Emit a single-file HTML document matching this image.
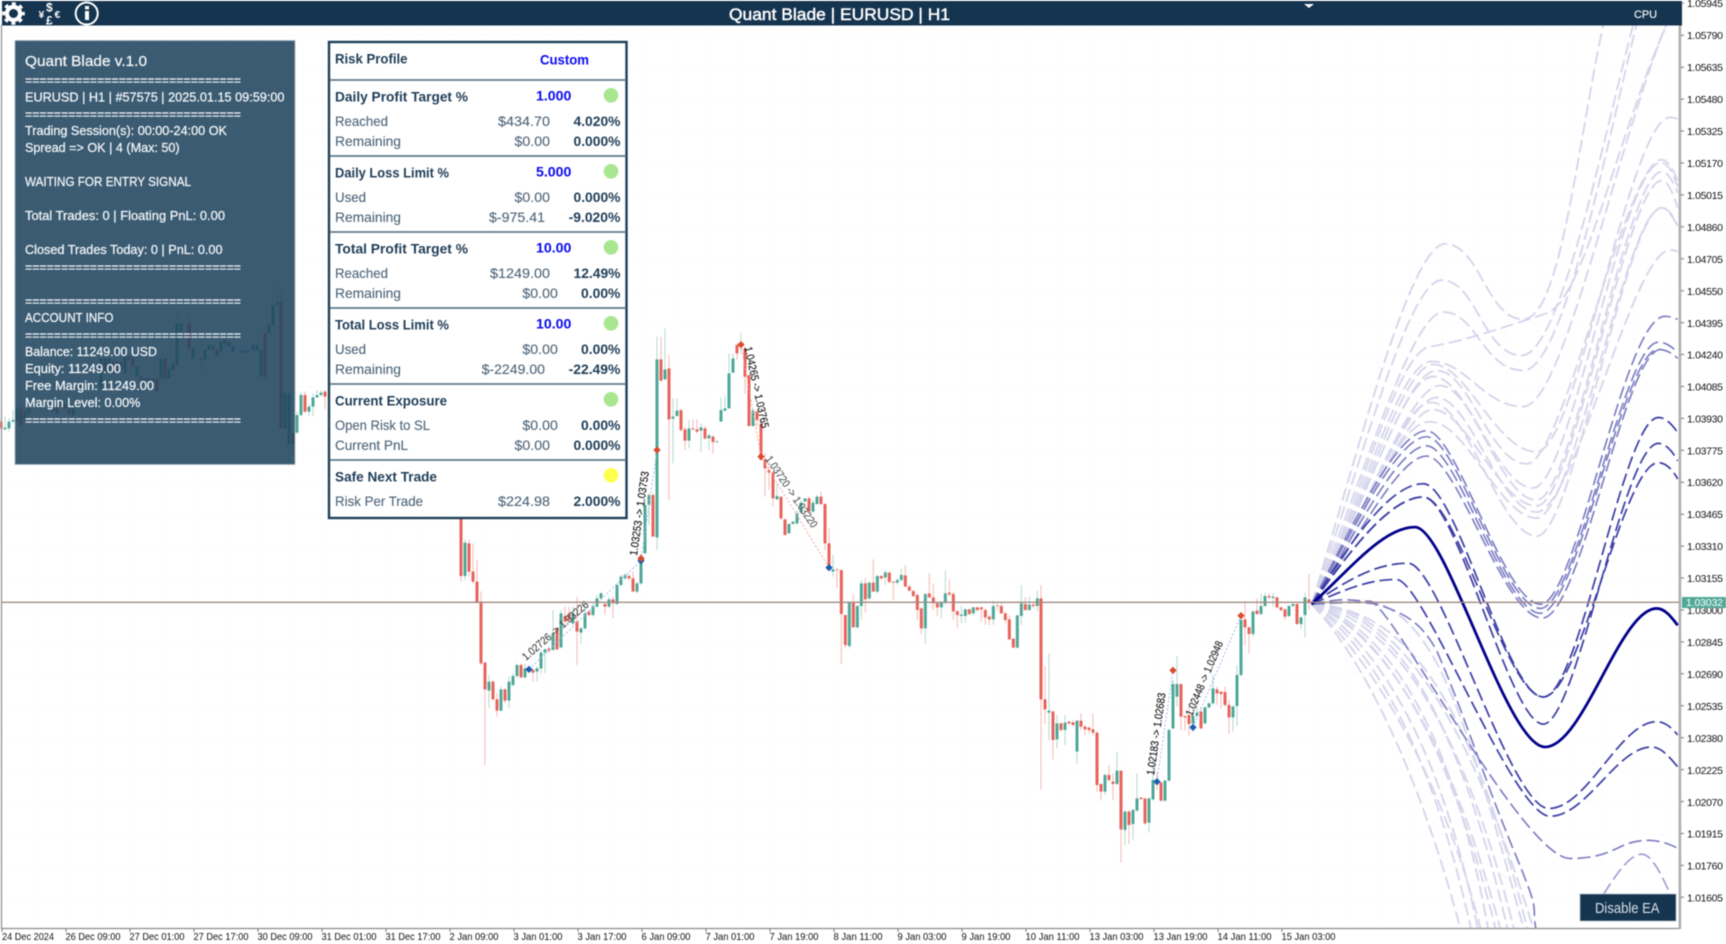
<!DOCTYPE html>
<html><head><meta charset="utf-8"><title>Quant Blade</title>
<style>
html,body{margin:0;padding:0;background:#fff;width:1726px;height:944px;overflow:hidden}
svg{display:block;position:absolute;left:0;top:0;filter:blur(.4px)}
text{font-family:"Liberation Sans",sans-serif}
.rb{fill:none;stroke:#e8635a;stroke-width:9}
.gb{fill:none;stroke:#4fa898;stroke-width:9}
.rw{fill:none;stroke:#f5b9b4;stroke-width:3}
.gw{fill:none;stroke:#b3dad2;stroke-width:3}
.mk-b{fill:#1c5db0}.mk-r{fill:#d94c2c}
.dl-b{fill:none;stroke:#9dbbe8;stroke-width:3;stroke-dasharray:6 6}
.dl-r{fill:none;stroke:#f0a898;stroke-width:3;stroke-dasharray:6 6}
.f path{fill:none;vector-effect:non-scaling-stroke;stroke-dasharray:13 5}
.fl path{stroke:#d6d6ec;stroke-width:1.9}
.fm path{stroke:#7a7ac2;stroke-width:1.6}
.fd path{stroke:#3c3ca6;stroke-width:1.7}
.p text{fill:#f4f7f9;font-size:13px;stroke:#f4f7f9;stroke-width:.25}
.t{fill:#1f3d57;font-size:14px;font-weight:bold}
.l{fill:#4c6377;font-size:14px;stroke:#4c6377;stroke-width:.1}
.a{fill:#4c6377;font-size:14px;stroke:#4c6377;stroke-width:.1}
.c{fill:#1f3d57;font-size:14px;font-weight:bold}
.v{fill:#0a0aee;font-size:14px;font-weight:bold}
.ax text{fill:#111;font-size:10.5px}
.rt{font-size:11px;stroke-width:.15}
</style></head>
<body>
<svg width="1726" height="944" viewBox="0 0 1726 944" xmlns="http://www.w3.org/2000/svg">
<defs>
<pattern id="gr" x="2" y="3.3" width="32" height="31.93" patternUnits="userSpaceOnUse">
<path d="M0 0V31.93M0 0H32" fill="none" stroke="#e9e9e9" stroke-width="1" stroke-dasharray="1 3"/>
</pattern>
<clipPath id="cc"><rect x="2" y="25" width="1678" height="903"/></clipPath>
</defs>
<rect width="1726" height="944" fill="#fff"/>
<rect x="2" y="25" width="1678" height="903" fill="url(#gr)"/>

<!-- left candles -->
<g transform="translate(0,280) scale(.33333)">
<path class="rw" d="M915 335V400M975 330V388M3 415V450M843 30V445M879 455V525M795 150V295M567 100V210M495 230V300M471 290V340M63 375V440M171 365V405"/>
<path class="gw" d="M891 395V462M903 335V410M927 370V408M939 340V408M951 330V355M963 330V350M27 415V455M39 390V430M51 375V430M75 385V425M15 410V450M819 35V140M831 10V80M867 335V550M855 315V450M783 205V295M531 95V260M303 225V335M603 230V280M579 200V240"/>
<path class="gb" d="M891 405V458M903 345V405M927 380V395M939 352V380M951 345V352M963 338V345M27 425V445M39 420V425M51 385V425M15 443V448M75 395V415M87 385V400M819 75V135M807 135V160M831 68V75M855 340V445M867 340V495M783 210V290M771 195V212M759 195V210M735 212V218M723 212V218M699 200V215M687 185V200M663 185V215M639 195V210M627 195V210M615 210V240M579 205V235M543 130V155M531 130V255M519 250V270M507 265V295M483 235V295M459 295V310M435 295V305M411 260V290M375 230V280M351 245V255M327 235V275M303 235V330M219 385V405M183 370V375M159 380V395"/>
<path class="rb" d="M915 345V395M975 335V350M3 425V445M843 65V445M879 460V492M795 160V290M567 130V205M495 235V295M471 295V335M447 295V305M423 290V300M399 235V260M387 230V240M363 245V270M339 245V280M315 235V280M651 210V228M675 180V190M207 385V402M195 372V385M171 370V400M63 385V435M603 235V240M747 212V215"/>
</g>

<!-- candles group A -->
<g transform="translate(440,320) scale(.33333)">
<path class="rw" d="M63 594V785M87 658V770M99 670V790M111 720V850M123 815V1035M135 1025V1335M159 1080V1140M171 1120V1190M195 1105V1150M243 1030V1075M279 1045V1085M327 980V1000M351 920V990M375 860V910M387 860V905M411 830V1035M447 870V890M495 850V885M519 830V895M567 762V780M579 755V815M639 520V650M663 50V185M687 105V540M723 270V335M735 320V390M759 298V330M771 298V340M795 318V360M819 345V400M891 70V120M915 80V220M927 165V320M951 270V320M963 300V420M975 400V530M987 440V510M999 455V560M1023 530V600M1035 595V645M1107 530V580M1143 515V555M1155 550V690M1167 625V750M1191 745V805"/>
<path class="gw" d="M75 658V780M147 1065V1165M183 1100V1175M207 1070V1165M219 1060V1100M231 1030V1075M255 1030V1075M291 1040V1085M303 990V1060M315 985V1060M339 870V990M363 870V985M399 860V915M423 920V970M435 860V930M459 850V890M471 825V865M483 815V840M507 830V865M531 790V855M543 765V800M555 760V780M591 785V820M603 700V795M615 540V700M627 520V615M651 50V690M675 25V180M699 235V430M711 235V290M747 300V385M783 310V395M807 340V390M831 360V370M843 232V305M855 230V275M867 100V265M879 100V160M903 38V100M939 265V320M1011 490V540M1047 610V640M1071 570V615M1083 540V580M1119 540V580M1131 525V555M1179 705V770"/>
<path class="rb" d="M63 594V768M87 670V755M99 755V785M111 785V848M123 845V1030M135 1028V1108M159 1085V1138M171 1138V1172M195 1108V1142M243 1035V1072M267 1048V1055M279 1050V1058M327 985V992M351 925V988M375 888V905M387 880V900M411 905V935M447 875V885M495 852V860M519 838V850M567 768V775M579 775V815M639 525V650M663 118V182M687 145V298M723 270V330M735 328V362M759 325V328M771 328V335M795 325V355M819 350V366M891 75V100M915 85V170M927 165V318M951 275V300M963 310V420M975 418V445M987 450V458M999 458V535M1023 530V595M1035 598V645M1107 535V575M1143 530V552M1155 552V670M1167 670V745M1191 748V750"/>
<path class="gb" d="M75 668V768M147 1085V1112M183 1108V1172M207 1085V1142M219 1068V1095M231 1035V1068M255 1045V1072M291 1045V1055M303 998V1045M315 988V998M339 940V990M363 880V982M399 880V910M423 925V938M435 880V925M459 858V885M471 835V860M483 820V835M507 838V860M531 795V852M543 770V795M555 765V775M591 790V815M603 725V790M615 555V700M627 525V555M651 118V652M675 148V178M699 290V296M711 272V288M747 325V362M783 322V332M807 346V355M831 364V366M843 270V305M855 265V272M867 160V265M879 115V158M939 272V318M1011 528V538M1047 612V640M1059 605V612M1071 580V610M1083 548V578M1095 535V545M1119 548V575M1131 530V552M1179 748V755"/>
<path class="dl-b" d="M267 1048L603 722M603 722L651 390"/>
<path class="dl-r" d="M903 74L963 410M963 410L1167 743"/>
<path class="mk-b" d="M267 1037l11 11-11 11-11-11zM603 711l11 11-11 11-11-11zM1167 732l11 11-11 11-11-11z"/>
<path class="mk-r" d="M603 704l11 11-11 11-11-11zM651 379l11 11-11 11-11-11zM903 63l11 11-11 11-11-11zM963 399l11 11-11 11-11-11z"/>
</g>

<!-- candles group B -->
<g transform="translate(820,540) scale(.33333)">
<path class="rw" d="M64 90V372M76 225V325M100 165V262M136 115V218M160 58V155M184 105V120M208 95V130M220 125V180M256 75V140M268 135V155M280 150V172M292 160V240M304 200V282M328 100V175M340 130V210M352 185V228M388 118V170M400 155V240M412 210V265M448 205V225M472 200V215M484 200V245M496 205V255M508 225V255M532 190V210M544 188V222M556 215V250M568 225V300M580 295V325M616 172V212M640 190V205"/>
<path class="gw" d="M88 185V325M112 195V265M124 120V240M148 125V180M172 105V160M196 90V135M232 115V135M244 85V125M316 160V310M364 185V235M376 92V195M424 198V250M436 205V248M460 200V225M520 182V255M592 225V325M604 135V255M628 170V212M652 152V215"/>
<path class="rb" d="M64 90V222M76 225V315M100 188V262M136 130V178M160 128V155M184 108V115M208 98V126M220 125V128M256 106V140M268 140V152M280 153V168M292 165V210M304 205V265M328 160V172M340 172V190M352 190V202M388 158V163M400 162V214M412 214V225M448 208V222M472 202V210M484 202V208M496 210V232M508 230V238M532 196V198M544 198V220M556 220V240M568 238V298M580 296V323M616 192V210M640 194V198"/>
<path class="gb" d="M88 188V318M112 198V262M124 130V198M148 128V175M172 108V155M196 97V112M232 120V128M244 105V120M316 162V265M364 188V202M376 160V188M424 224V228M436 208V228M460 202V220M520 198V238M592 226V323M604 190V228M628 194V210M652 175V198"/>
</g>

<!-- candles group C -->
<g transform="translate(1000,560) scale(.33333)">
<path class="rw" d="M123 75V688M135 318V492M159 450V598M183 488V515M207 483V495M219 480V500M243 460V510M255 495V525M267 500V520M279 460V525M291 515V695M303 670V720M327 615V665M339 640V720M363 632V908M387 750V852M423 715V720M435 715V795M471 635V690M483 665V725M543 372V510M555 468V512M567 440V528M603 440V508M651 380V435M663 395V445M675 380V440M687 420V522M735 125V255M747 200V280M771 115V165M807 100V118M831 110V145M843 140V155M855 145V180M891 130V195M927 42V150"/>
<path class="gw" d="M147 280V542M171 465V565M195 465V555M231 480V612M315 640V705M351 575V675M375 750V855M399 745V840M411 640V755M447 712V818M459 600V722M495 660V725M507 505V665M519 360V508M531 288V440M579 440V515M591 440V472M615 440V492M627 425V445M639 345V435M699 435V515M711 315V498M723 165V350M759 150V230M783 100V165M795 98V140M819 100V140M867 135V172M879 130V142M903 170V205M915 98V232"/>
<path class="rb" d="M123 115V418M135 418V448M159 455V540M183 490V510M207 485V490M219 487V495M243 482V500M255 500V508M267 503V510M279 508V518M291 518V675M303 672V695M327 645V660M339 665V672M363 632V808M387 755V795M423 713V717M435 715V790M471 658V668M483 668V722M543 372V470M555 468V472M567 465V492M603 455V505M651 388V400M663 395V402M675 396V435M687 435V472M735 178V202M747 202V222M771 152V162M807 108V112M831 112V142M843 142V150M855 148V170M891 132V192M927 118V128"/>
<path class="gb" d="M147 452V458M171 490V538M195 488V510M231 482V575M315 645V695M351 632V672M375 755V810M399 750V792M411 715V752M447 715V788M459 660V718M495 662V722M507 510V662M519 372V505M531 372V410M579 468V490M591 458V468M615 442V490M627 430V442M639 385V430M699 440V472M711 345V438M723 180V345M759 155V222M783 138V162M795 108V138M819 110V114M867 138V168M879 132V138M903 172V192M915 112V165"/>
<path class="dl-b" d="M471 665L519 331M579 502L723 167"/>
<path class="mk-b" d="M471 654l11 11-11 11-11-11zM579 491l11 11-11 11-11-11z"/>
<path class="mk-r" d="M519 320l11 11-11 11-11-11zM723 156l11 11-11 11-11-11z"/>
</g>

<!-- rotated labels -->
<text class="rt" transform="translate(526,661) rotate(-41)" fill="#444" stroke="#444" textLength="84" lengthAdjust="spacingAndGlyphs">1.02726 -&gt; 1.03226</text>
<text class="rt" transform="translate(637,556) rotate(-82)" fill="#111" stroke="#111" textLength="85" lengthAdjust="spacingAndGlyphs">1.03253 -&gt; 1.03753</text>
<text class="rt" transform="translate(744.5,347.5) rotate(78)" fill="#111" stroke="#111" textLength="83" lengthAdjust="spacingAndGlyphs">1.04265 -&gt; 1.03765</text>
<text class="rt" transform="translate(765,459) rotate(56)" fill="#555" stroke="#555" textLength="84" lengthAdjust="spacingAndGlyphs">1.03720 -&gt; 1.03220</text>
<text class="rt" transform="translate(1154,775.5) rotate(-82)" fill="#111" stroke="#111" textLength="83" lengthAdjust="spacingAndGlyphs">1.02183 -&gt; 1.02683</text>
<text class="rt" transform="translate(1192,716.6) rotate(-67)" fill="#222" stroke="#222" textLength="80" lengthAdjust="spacingAndGlyphs">1.02448 -&gt; 1.02948</text>

<!-- forecast fan -->
<g clip-path="url(#cc)">
<g transform="translate(1250,0) scale(.33333,.60241)">
<g class="f fl">
<path d="M185 1003C320 760 480 405 585 405S710 530 820 530S980 250 1060 40"/>
<path d="M185 1003C320 800 470 465 575 465S700 590 815 590S1060 230 1150 40"/>
<path d="M185 1003C320 830 480 518 580 518S700 615 820 615S1070 240 1160 40"/>
<path d="M185 1003C320 860 440 575 545 575C650 565 780 540 890 520S1100 230 1250 40"/>
<path d="M185 1003C320 870 440 600 545 600S700 675 820 675S1100 240 1250 40"/>
<path d="M185 1003C320 880 450 605 550 605S740 750 860 750S1140 195 1260 195C1270 195 1278 196 1283 198"/>
<path d="M185 1003C320 880 460 615 560 615S720 770 830 770S1130 265 1235 265C1255 265 1272 285 1283 300"/>
<path d="M185 1003C320 895 470 640 570 640S750 830 860 830S1130 285 1235 285C1255 285 1272 305 1283 320"/>
<path d="M185 1003C320 900 440 668 545 668S750 890 860 890S1130 345 1235 345C1255 345 1272 360 1283 375"/>
<path d="M185 1003C320 895 460 660 560 660S750 850 860 850S1150 415 1260 415C1268 415 1276 416 1283 418"/>
<path d="M185 1003C320 900 430 700 540 700S750 860 860 860S1130 345 1235 345C1255 345 1272 365 1283 375"/>
<path d="M185 1003C320 885 450 625 550 625S740 810 850 810S1120 270 1232 270C1255 270 1272 290 1283 310"/>
<path d="M185 1003C320 905 450 680 550 680S750 840 860 840S1130 300 1235 300C1255 300 1272 325 1283 345"/>
<path d="M185 1003C280 1000 330 998 380 1000C560 1040 640 1170 830 1560"/>
<path d="M185 1003C400 1000 640 1150 860 1560"/>
<path d="M185 1003C380 1020 620 1150 800 1560"/>
<path d="M185 1003C360 1040 580 1180 760 1560"/>
<path d="M185 1003C340 1060 540 1220 670 1560"/>
<path d="M185 1003C320 1080 500 1260 640 1560"/>
<path d="M185 1003C380 1010 600 1120 780 1560"/>
<path d="M185 1003C370 1030 600 1170 720 1560"/>
<path d="M185 1003C300 1060 560 1240 700 1560"/>
<path d="M185 1003C420 1010 640 1100 840 1560"/>
<path d="M185 1003C340 1030 570 1160 745 1560"/>
<path d="M185 1003C330 1045 560 1190 690 1560"/>
</g>
<g class="f fm">
<path d="M185 1003C300 880 440 715 530 715S760 1000 870 1003S1120 525 1245 525C1260 525 1272 528 1283 530"/>
<path d="M185 1003C300 890 440 725 530 725S760 1008 870 1010S1120 568 1225 568C1250 568 1270 578 1283 585"/>
<path d="M185 1003C300 905 440 740 530 740S760 1015 870 1018S1120 580 1225 580C1250 580 1270 588 1283 595"/>
<path d="M185 1003C300 920 440 757 530 757S760 1022 875 1026S1120 590 1230 580"/>
<path d="M185 1003C280 1000 330 998 380 1003C480 1020 520 1040 560 1080C640 1180 700 1290 790 1410S840 1490 860 1550"/>
<path d="M185 1003C300 990 300 998 360 998S820 1425 960 1425S1100 1395 1195 1395C1225 1395 1255 1400 1283 1408"/>
<path style="stroke:#9a9ad0" d="M1060 1485C1100 1450 1140 1418 1175 1418S1240 1460 1283 1510"/>
</g>
<g class="f fd">
<path d="M185 1003C300 900 420 803 520 803S770 1157 880 1157S1120 693 1225 693C1250 693 1270 708 1283 718"/>
<path d="M185 1003C300 915 420 825 520 825S780 1202 880 1202S1120 736 1225 736C1250 736 1270 752 1283 765"/>
<path d="M185 1003C300 915 420 825 520 825S770 1157 880 1157S1120 768 1225 768C1250 768 1270 782 1283 795"/>
<path d="M185 1003C300 960 380 935 475 935S780 1340 895 1342S1110 1198 1220 1198C1245 1198 1265 1208 1283 1220"/>
<path d="M185 1003C300 975 360 962 440 962S790 1355 900 1355S1100 1240 1205 1240C1235 1240 1260 1258 1283 1273"/>
</g>
<path d="M185 1003C300 945 400 875 495 875S770 1240 885 1240S1110 1010 1220 1010C1245 1010 1265 1025 1283 1038" fill="none" stroke="#00008b" stroke-width="2.8" vector-effect="non-scaling-stroke"/>
</g>
</g>

<!-- price line -->
<path d="M2 602.3H1680" stroke="#a08a82" stroke-width="1.3" fill="none"/>

<!-- chart frame -->
<path d="M1.5 25V928.5H1680" fill="none" stroke="#8c8c8c" stroke-width="1.2"/>
<rect x="1678.6" y="25" width="2.6" height="904" fill="#aeaeae"/>

<!-- left panel -->
<rect x="15" y="40.5" width="280" height="424" fill="rgb(32,68,94)" fill-opacity=".88" stroke="#a9b8c3" stroke-width=".8"/>
<g class="p">
<text x="25" y="66" style="font-size:15px" textLength="122" lengthAdjust="spacingAndGlyphs">Quant Blade v.1.0</text>
<text x="25" y="84.3" textLength="216" lengthAdjust="spacingAndGlyphs">==============================</text>
<text x="25" y="101.3" textLength="259.5" lengthAdjust="spacingAndGlyphs">EURUSD | H1 | #57575 | 2025.01.15 09:59:00</text>
<text x="25" y="118.3" textLength="216" lengthAdjust="spacingAndGlyphs">==============================</text>
<text x="25" y="135" textLength="202" lengthAdjust="spacingAndGlyphs">Trading Session(s): 00:00-24:00  OK</text>
<text x="25" y="152" textLength="154.6" lengthAdjust="spacingAndGlyphs">Spread =&gt; OK | 4 (Max: 50)</text>
<text x="25" y="186" textLength="166" lengthAdjust="spacingAndGlyphs">WAITING FOR ENTRY SIGNAL</text>
<text x="25" y="220" textLength="200" lengthAdjust="spacingAndGlyphs">Total Trades: 0 | Floating PnL: 0.00</text>
<text x="25" y="254" textLength="197.5" lengthAdjust="spacingAndGlyphs">Closed Trades Today: 0 | PnL: 0.00</text>
<text x="25" y="271.3" textLength="216" lengthAdjust="spacingAndGlyphs">==============================</text>
<text x="25" y="305.3" textLength="216" lengthAdjust="spacingAndGlyphs">==============================</text>
<text x="25" y="322" textLength="88.5" lengthAdjust="spacingAndGlyphs">ACCOUNT INFO</text>
<text x="25" y="339.3" textLength="216" lengthAdjust="spacingAndGlyphs">==============================</text>
<text x="25" y="356" textLength="132" lengthAdjust="spacingAndGlyphs">Balance: 11249.00 USD</text>
<text x="25" y="373" textLength="96" lengthAdjust="spacingAndGlyphs">Equity: 11249.00</text>
<text x="25" y="390" textLength="129" lengthAdjust="spacingAndGlyphs">Free Margin: 11249.00</text>
<text x="25" y="407" textLength="115.4" lengthAdjust="spacingAndGlyphs">Margin Level: 0.00%</text>
<text x="25" y="424.3" textLength="216" lengthAdjust="spacingAndGlyphs">==============================</text>
</g>

<!-- risk table -->
<rect x="329" y="42" width="297.5" height="476" fill="#fff" stroke="#1d3e57" stroke-width="2.4"/>
<path d="M330 80H626M330 156H626M330 232H626M330 308H626M330 384H626M330 460H626" stroke="#5f7b8d" stroke-width="1.8" fill="none"/>
<text class="t" x="335" y="63.5" textLength="72.5" lengthAdjust="spacingAndGlyphs">Risk Profile</text>
<text class="v" x="540" y="64.5" textLength="49" lengthAdjust="spacingAndGlyphs">Custom</text>

<text class="t" x="335" y="101.3" textLength="133" lengthAdjust="spacingAndGlyphs">Daily Profit Target %</text>
<text class="v" x="536" y="100.5" textLength="35.4" lengthAdjust="spacingAndGlyphs">1.000</text>
<circle cx="611" cy="95.3" r="7.3" fill="#a8e68f"/>
<text class="l" x="335" y="126" textLength="53" lengthAdjust="spacingAndGlyphs">Reached</text>
<text class="a" x="498" y="126" textLength="52" lengthAdjust="spacingAndGlyphs">$434.70</text>
<text class="c" x="573.5" y="126" textLength="47" lengthAdjust="spacingAndGlyphs">4.020%</text>
<text class="l" x="335" y="146" textLength="66" lengthAdjust="spacingAndGlyphs">Remaining</text>
<text class="a" x="514.5" y="146" textLength="35.5" lengthAdjust="spacingAndGlyphs">$0.00</text>
<text class="c" x="573.5" y="146" textLength="47" lengthAdjust="spacingAndGlyphs">0.000%</text>

<text class="t" x="335" y="177.3" textLength="114" lengthAdjust="spacingAndGlyphs">Daily Loss Limit %</text>
<text class="v" x="536" y="176.5" textLength="35.4" lengthAdjust="spacingAndGlyphs">5.000</text>
<circle cx="611" cy="171.3" r="7.3" fill="#a8e68f"/>
<text class="l" x="335" y="202" textLength="31" lengthAdjust="spacingAndGlyphs">Used</text>
<text class="a" x="514.5" y="202" textLength="35.5" lengthAdjust="spacingAndGlyphs">$0.00</text>
<text class="c" x="573.5" y="202" textLength="47" lengthAdjust="spacingAndGlyphs">0.000%</text>
<text class="l" x="335" y="222" textLength="66" lengthAdjust="spacingAndGlyphs">Remaining</text>
<text class="a" x="489" y="222" textLength="56" lengthAdjust="spacingAndGlyphs">$-975.41</text>
<text class="c" x="568.6" y="222" textLength="51.8" lengthAdjust="spacingAndGlyphs">-9.020%</text>

<text class="t" x="335" y="253.3" textLength="133" lengthAdjust="spacingAndGlyphs">Total Profit Target %</text>
<text class="v" x="536" y="252.5" textLength="35.4" lengthAdjust="spacingAndGlyphs">10.00</text>
<circle cx="611" cy="247.3" r="7.3" fill="#a8e68f"/>
<text class="l" x="335" y="278" textLength="53" lengthAdjust="spacingAndGlyphs">Reached</text>
<text class="a" x="490" y="278" textLength="60" lengthAdjust="spacingAndGlyphs">$1249.00</text>
<text class="c" x="573.5" y="278" textLength="47" lengthAdjust="spacingAndGlyphs">12.49%</text>
<text class="l" x="335" y="298" textLength="66" lengthAdjust="spacingAndGlyphs">Remaining</text>
<text class="a" x="522.4" y="298" textLength="35.5" lengthAdjust="spacingAndGlyphs">$0.00</text>
<text class="c" x="581" y="298" textLength="39.4" lengthAdjust="spacingAndGlyphs">0.00%</text>

<text class="t" x="335" y="329.3" textLength="114" lengthAdjust="spacingAndGlyphs">Total Loss Limit %</text>
<text class="v" x="536" y="328.5" textLength="35.4" lengthAdjust="spacingAndGlyphs">10.00</text>
<circle cx="611" cy="323.3" r="7.3" fill="#a8e68f"/>
<text class="l" x="335" y="354" textLength="31" lengthAdjust="spacingAndGlyphs">Used</text>
<text class="a" x="522.4" y="354" textLength="35.5" lengthAdjust="spacingAndGlyphs">$0.00</text>
<text class="c" x="581" y="354" textLength="39.4" lengthAdjust="spacingAndGlyphs">0.00%</text>
<text class="l" x="335" y="374" textLength="66" lengthAdjust="spacingAndGlyphs">Remaining</text>
<text class="a" x="481.6" y="374" textLength="63.4" lengthAdjust="spacingAndGlyphs">$-2249.00</text>
<text class="c" x="568.6" y="374" textLength="51.8" lengthAdjust="spacingAndGlyphs">-22.49%</text>

<text class="t" x="335" y="405.3" textLength="112" lengthAdjust="spacingAndGlyphs">Current Exposure</text>
<circle cx="611" cy="399.3" r="7.3" fill="#a8e68f"/>
<text class="l" x="335" y="430" textLength="95" lengthAdjust="spacingAndGlyphs">Open Risk to SL</text>
<text class="a" x="522.4" y="430" textLength="35.5" lengthAdjust="spacingAndGlyphs">$0.00</text>
<text class="c" x="581" y="430" textLength="39.4" lengthAdjust="spacingAndGlyphs">0.00%</text>
<text class="l" x="335" y="450" textLength="73" lengthAdjust="spacingAndGlyphs">Current PnL</text>
<text class="a" x="514.5" y="450" textLength="35.5" lengthAdjust="spacingAndGlyphs">$0.00</text>
<text class="c" x="573.5" y="450" textLength="47" lengthAdjust="spacingAndGlyphs">0.000%</text>

<text class="t" x="335" y="481.3" textLength="102" lengthAdjust="spacingAndGlyphs">Safe Next Trade</text>
<circle cx="611" cy="475.3" r="7.3" fill="#ffff4d"/>
<text class="l" x="335" y="506" textLength="88" lengthAdjust="spacingAndGlyphs">Risk Per Trade</text>
<text class="a" x="498" y="506" textLength="52" lengthAdjust="spacingAndGlyphs">$224.98</text>
<text class="c" x="573.5" y="506" textLength="47" lengthAdjust="spacingAndGlyphs">2.000%</text>

<!-- top bar -->
<rect x="2" y="1" width="1680" height="24.5" fill="#15344f"/>
<g fill="none" stroke="#fff">
<circle cx="13.5" cy="13.5" r="6.6" stroke-width="4.2"/>
<circle cx="13.5" cy="13.5" r="9.6" stroke-width="3.4" stroke-dasharray="3.8 3.74" stroke-dashoffset="1.9"/>
<circle cx="86.7" cy="13.5" r="11" stroke-width="2"/>
</g>
<path d="M85 11h4v9h-4zM85 6h4v3.4h-4z" fill="#fff"/>
<g fill="#fff" font-weight="bold">
<text x="38.5" y="18" font-size="10.5">¥</text>
<text x="46" y="11.5" font-size="12">$</text>
<text x="54.5" y="18" font-size="10.5">€</text>
<text x="46" y="24.5" font-size="12">£</text>
</g>
<text x="729" y="20" fill="#fff" stroke="#fff" stroke-width=".45" font-size="17" textLength="221" lengthAdjust="spacingAndGlyphs">Quant Blade | EURUSD | H1</text>
<path d="M1304 4h10l-5 4z" fill="#fff"/>
<text x="1634" y="18" fill="#e8edf0" stroke="#e8edf0" stroke-width=".25" font-size="11" textLength="23" lengthAdjust="spacingAndGlyphs">CPU</text>

<!-- price axis -->
<g class="ax">
<path d="M1681 3.3h3M1681 35.2h3M1681 67.2h3M1681 99.1h3M1681 131h3M1681 163h3M1681 194.9h3M1681 226.8h3M1681 258.7h3M1681 290.7h3M1681 322.6h3M1681 354.5h3M1681 386.5h3M1681 418.4h3M1681 450.3h3M1681 482.3h3M1681 514.2h3M1681 546.1h3M1681 578h3M1681 610h3M1681 641.9h3M1681 673.8h3M1681 705.8h3M1681 737.7h3M1681 769.6h3M1681 801.5h3M1681 833.5h3M1681 865.4h3M1681 897.3h3" stroke="#777" fill="none"/>
<text x="1687" y="7" textLength="36">1.05945</text>
<text x="1687" y="39" textLength="36">1.05790</text>
<text x="1687" y="71" textLength="36">1.05635</text>
<text x="1687" y="103" textLength="36">1.05480</text>
<text x="1687" y="135" textLength="36">1.05325</text>
<text x="1687" y="167" textLength="36">1.05170</text>
<text x="1687" y="199" textLength="36">1.05015</text>
<text x="1687" y="231" textLength="36">1.04860</text>
<text x="1687" y="263" textLength="36">1.04705</text>
<text x="1687" y="295" textLength="36">1.04550</text>
<text x="1687" y="327" textLength="36">1.04395</text>
<text x="1687" y="358.5" textLength="36">1.04240</text>
<text x="1687" y="390.5" textLength="36">1.04085</text>
<text x="1687" y="422.5" textLength="36">1.03930</text>
<text x="1687" y="454.5" textLength="36">1.03775</text>
<text x="1687" y="486" textLength="36">1.03620</text>
<text x="1687" y="518" textLength="36">1.03465</text>
<text x="1687" y="550" textLength="36">1.03310</text>
<text x="1687" y="582" textLength="36">1.03155</text>
<text x="1687" y="614" textLength="36">1.03000</text>
<text x="1687" y="646" textLength="36">1.02845</text>
<text x="1687" y="678" textLength="36">1.02690</text>
<text x="1687" y="710" textLength="36">1.02535</text>
<text x="1687" y="742" textLength="36">1.02380</text>
<text x="1687" y="774" textLength="36">1.02225</text>
<text x="1687" y="806" textLength="36">1.02070</text>
<text x="1687" y="837.5" textLength="36">1.01915</text>
<text x="1687" y="869.5" textLength="36">1.01760</text>
<text x="1687" y="901.5" textLength="36">1.01605</text>
<rect x="1682" y="597" width="44" height="11" fill="#4fa898"/>
<text x="1686" y="606.2" style="fill:#fff" textLength="37">1.03032</text>

<!-- time axis -->
<path d="M2 929v3M66 929v3M130 929v3M194 929v3M258 929v3M322 929v3M386 929v3M450 929v3M514 929v3M578 929v3M642 929v3M706 929v3M770 929v3M834 929v3M898 929v3M962 929v3M1026 929v3M1090 929v3M1154 929v3M1218 929v3M1282 929v3" stroke="#777" fill="none"/>
<text x="2" y="940" textLength="52" lengthAdjust="spacingAndGlyphs">24 Dec 2024</text>
<text x="65.5" y="940" textLength="55" lengthAdjust="spacingAndGlyphs">26 Dec 09:00</text>
<text x="129.5" y="940" textLength="55" lengthAdjust="spacingAndGlyphs">27 Dec 01:00</text>
<text x="193.5" y="940" textLength="55" lengthAdjust="spacingAndGlyphs">27 Dec 17:00</text>
<text x="257.5" y="940" textLength="55" lengthAdjust="spacingAndGlyphs">30 Dec 09:00</text>
<text x="321.5" y="940" textLength="55" lengthAdjust="spacingAndGlyphs">31 Dec 01:00</text>
<text x="385.5" y="940" textLength="55" lengthAdjust="spacingAndGlyphs">31 Dec 17:00</text>
<text x="449.5" y="940" textLength="49" lengthAdjust="spacingAndGlyphs">2 Jan 09:00</text>
<text x="513.5" y="940" textLength="49" lengthAdjust="spacingAndGlyphs">3 Jan 01:00</text>
<text x="577.5" y="940" textLength="49" lengthAdjust="spacingAndGlyphs">3 Jan 17:00</text>
<text x="641.5" y="940" textLength="49" lengthAdjust="spacingAndGlyphs">6 Jan 09:00</text>
<text x="705.5" y="940" textLength="49" lengthAdjust="spacingAndGlyphs">7 Jan 01:00</text>
<text x="769.5" y="940" textLength="49" lengthAdjust="spacingAndGlyphs">7 Jan 19:00</text>
<text x="833.5" y="940" textLength="49" lengthAdjust="spacingAndGlyphs">8 Jan 11:00</text>
<text x="897.5" y="940" textLength="49" lengthAdjust="spacingAndGlyphs">9 Jan 03:00</text>
<text x="961.5" y="940" textLength="49" lengthAdjust="spacingAndGlyphs">9 Jan 19:00</text>
<text x="1025.5" y="940" textLength="54" lengthAdjust="spacingAndGlyphs">10 Jan 11:00</text>
<text x="1089.5" y="940" textLength="54" lengthAdjust="spacingAndGlyphs">13 Jan 03:00</text>
<text x="1153.5" y="940" textLength="54" lengthAdjust="spacingAndGlyphs">13 Jan 19:00</text>
<text x="1217.5" y="940" textLength="54" lengthAdjust="spacingAndGlyphs">14 Jan 11:00</text>
<text x="1281.5" y="940" textLength="54" lengthAdjust="spacingAndGlyphs">15 Jan 03:00</text>
</g>

<!-- disable button -->
<rect x="1580" y="894" width="96" height="27" fill="#15344f" stroke="#a9bac6" stroke-width=".8"/>
<text x="1595" y="913" fill="#d8e0e6" font-size="15" textLength="64.5" lengthAdjust="spacingAndGlyphs">Disable EA</text>
</svg>
</body></html>
